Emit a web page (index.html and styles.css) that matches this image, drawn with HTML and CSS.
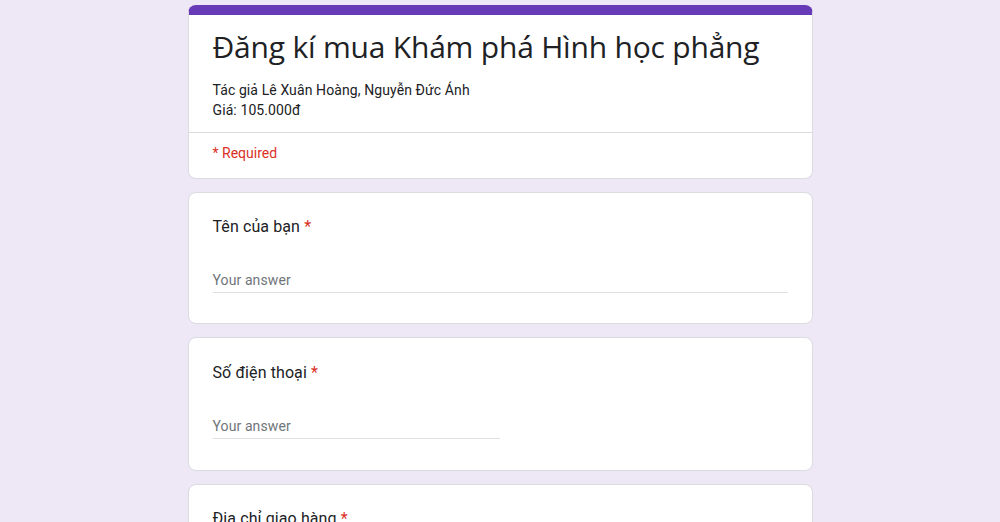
FILE: index.html
```html
<!DOCTYPE html>
<html lang="vi">
<head>
<meta charset="utf-8">
<title>Đăng kí mua Khám phá Hình học phẳng</title>
<link rel="stylesheet" href="styles.css">
</head>
<body>
<main class="form">
  <section class="card header-card">
    <div class="header-top">
      <h1 class="title">Đăng kí mua Khám phá Hình học phẳng</h1>
      <div class="desc">
        <div>Tác giả Lê Xuân Hoàng, Nguyễn Đức Ánh</div>
        <div>Giá: 105.000đ</div>
      </div>
    </div>
    <div class="required-note">* Required</div>
  </section>

  <section class="card question">
    <div class="q-label">Tên của bạn <span class="star">*</span></div>
    <div class="answer full">Your answer</div>
  </section>

  <section class="card question roomy">
    <div class="q-label">Số điện thoại <span class="star">*</span></div>
    <div class="answer half">Your answer</div>
  </section>

  <section class="card question">
    <div class="q-label">Địa chỉ giao hàng <span class="star">*</span></div>
    <div class="answer full">Your answer</div>
  </section>
</main>
</body>
</html>
```

FILE: styles.css
```css
* { box-sizing: border-box; }
html, body { margin: 0; padding: 0; }
body {
  background: #ede7f6;
  font-family: Roboto, "Liberation Sans", Arial, sans-serif;
  color: #202124;
  overflow: hidden;
}
.form {
  width: 625px;
  margin: 0 auto;
  padding-top: 5px;
  display: flex;
  flex-direction: column;
  gap: 13px;
}
.card {
  background: #fff;
  border: 1px solid #dadce0;
  border-radius: 8px;
}
.header-card {
  border-top: 10px solid #673ab7;
  border-radius: 8px;
}
.header-top {
  padding: 12px 24px 12px;
  border-bottom: 1px solid #dadce0;
}
.title {
  margin: 0;
  font-family: "Open Sans", sans-serif;
  font-weight: 400;
  font-size: 30px;
  line-height: 40px;
  color: #202124;
  letter-spacing: -0.2px;
}
.desc {
  margin-top: 13px;
  font-size: 14px;
  line-height: 20px;
  letter-spacing: 0.1px;
}
.required-note {
  padding: 10px 24px 15px;
  font-size: 14px;
  line-height: 20px;
  color: #d93025;
}
.question {
  padding: 22px 24px 30px;
}
.question.roomy {
  padding: 23px 24px 31px;
}
.q-label {
  font-size: 16px;
  line-height: 24px;
  letter-spacing: 0.1px;
}
.star { color: #d93025; }
.answer {
  margin-top: 31px;
  font-size: 14px;
  line-height: 20px;
  color: #70757a;
  letter-spacing: 0.1px;
  padding-bottom: 2px;
  border-bottom: 1px solid #e0e0e0;
}
.answer.half { width: 50%; }
```
